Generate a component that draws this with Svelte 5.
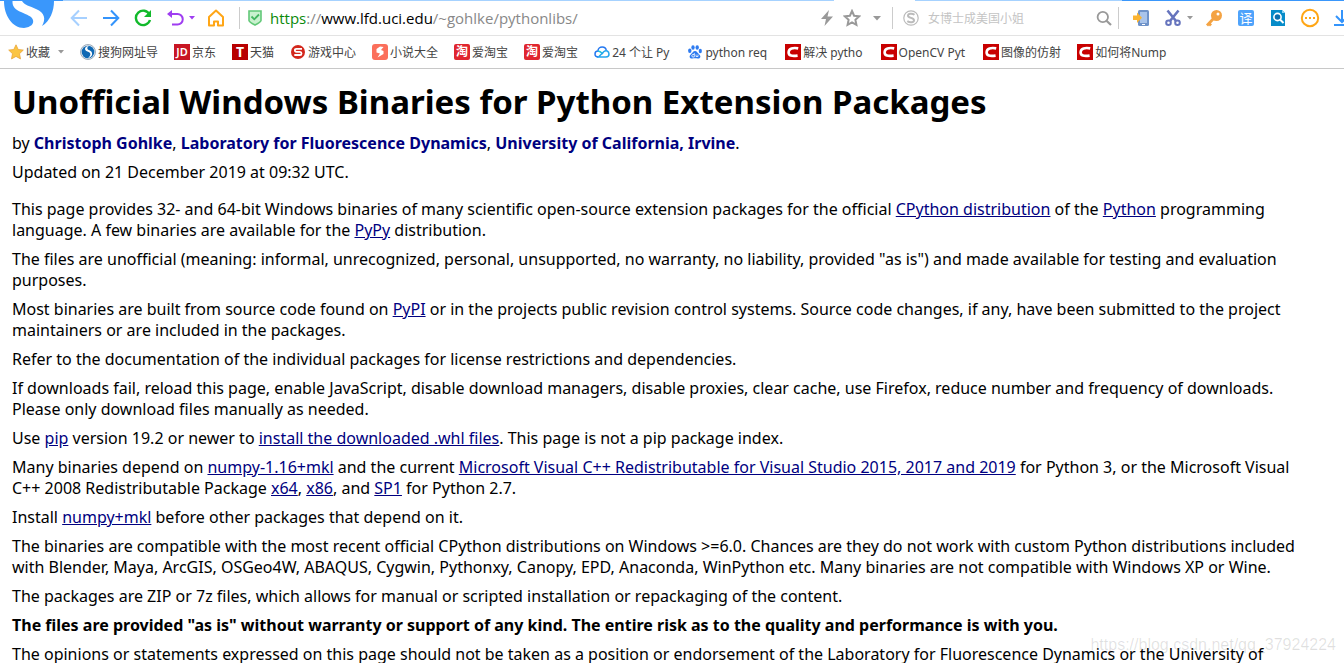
<script>
  const bookmarks = [
    { icon: 'sogou', text: '搜狗网址导' },
    { icon: 'jd', text: '京东' },
    { icon: 'tmall', text: '天猫' },
    { icon: 'game', text: '游戏中心' },
    { icon: 'novel', text: '小说大全' },
    { icon: 'tao', text: '爱淘宝' },
    { icon: 'tao', text: '爱淘宝' },
    { icon: 'cloud', text: '24 个让 Py' },
    { icon: 'baidu', text: 'python req' },
    { icon: 'csdn', text: '解决 pytho' },
    { icon: 'csdn', text: 'OpenCV Pyt' },
    { icon: 'csdn', text: '图像的仿射' },
    { icon: 'csdn', text: '如何将Nump' },
  ];

  const hasLatin = (text) => /[a-z]/i.test(text);
</script>

<svelte:head><title>Python Extension Packages for Windows</title></svelte:head>

{#snippet caret(color)}
  <svg width="6" height="4" viewBox="0 0 6 4"><path d="M0 0h6L3 3.5z" fill={color} /></svg>
{/snippet}

<header>
  <div class="strip"></div>
  <div class="toolbar">
    <svg class="logo" width="56" height="28" viewBox="0 0 56 28">
      <path d="M4 0C4 14 12 27 24 27C31 26 34 23 33 19C32 15 27 14 21 11C16 9 12 6 12.500 0z" fill="#3a97fb" />
      <path d="M22 0C24 4 30 5 36 8C45 12 46 18 42 25C50 20 54 10 54 0z" fill="#3a97fb" />
    </svg>
    <nav aria-label="Navigation">
      <button aria-label="Back"><svg width="18" height="18" viewBox="0 0 18 18" fill="none" stroke="#a6d0ff" stroke-width="2"><path d="M17 9H2M9 1.5L1.7 9L9 16.5" /></svg></button>
      <button aria-label="Forward"><svg width="18" height="18" viewBox="0 0 18 18" fill="none" stroke="#3494fb" stroke-width="2"><path d="M1 9h15M9 1.5L16.300 9L9 16.500" /></svg></button>
      <button aria-label="Reload"><svg width="18" height="18" viewBox="0 0 18 18" fill="none" stroke="#11b92b" stroke-width="2.400"><path d="M15.500 5.500A7.200 7.200 0 1 0 16 11" /><path d="M17 1v7h-7z" fill="#11b92b" stroke="none" /></svg></button>
      <button class="wide" aria-label="Undo close"><svg width="18" height="18" viewBox="0 0 18 18" fill="none" stroke="#9f3df1" stroke-width="2"><path d="M4 5h7.500a5 5 0 0 1 0 10.500H6" /><path d="M1 5L6 1v8z" fill="#9f3df1" stroke="none" /></svg>{@render caret('#9f3df1')}</button>
      <button aria-label="Home"><svg width="18" height="18" viewBox="0 0 18 18" fill="none" stroke="#ffa616" stroke-width="2"><path d="M2 16.500V8L9 1.500L16 8V16.500h-5v-4h-4v4z" stroke-linejoin="round" /></svg></button>
    </nav>
    <i class="sep"></i>
    <svg class="shield" width="14" height="16" viewBox="0 0 14 16"><path d="M1 1h12v9.500c0 1.500-3 3-6 4.500c-3-1.500-6-3-6-4.500z" fill="#c9f1ce" stroke="#62c878" stroke-width="1.600" /><path d="M3.500 6.500L6.300 9.300L11 4.500" fill="none" stroke="#43b65f" stroke-width="1.800" /></svg>
    <div class="url"><span class="scheme">https</span>://<span class="host">www.lfd.uci.edu</span>/~gohlke/pythonlibs/</div>
    <div class="page-actions">
      <button aria-label="Fast mode"><svg width="14" height="18" viewBox="0 0 14 18"><path d="M9 1L1 10h5L4.500 17L13 7.500H7.500z" fill="#999" /></svg></button>
      <button aria-label="Add bookmark"><svg width="18" height="18" viewBox="0 0 18 18"><path d="M9 2l2.100 4.700l5 .6l-3.700 3.500l1 5L9 13.300l-4.400 2.500l1-5L1.900 7.300l5-.6z" fill="none" stroke="#999" stroke-width="2" /></svg></button>
      <button aria-label="More page actions"><svg width="8" height="5" viewBox="0 0 8 5"><path d="M0 0h8L4 4.500z" fill="#999" /></svg></button>
    </div>
    <i class="sep"></i>
    <div class="search">
      <svg width="16" height="16" viewBox="0 0 16 16" fill="none" stroke="#bbb"><circle cx="8" cy="8" r="7.200" stroke-width="1.200" /><path d="M11.500 4.800C9 3 5 3.500 5 5.700C5 8.400 11 7.300 11 10.200C11 12.600 7 13 4.300 11.200" stroke-width="2" /></svg>
      <input aria-label="Search" placeholder="女博士成美国小姐" />
      <button aria-label="Run search"><svg width="16" height="16" viewBox="0 0 16 16" fill="none" stroke="#999" stroke-width="1.800"><circle cx="6.800" cy="7" r="5.200" /><path d="M10.500 10.700L15 15" stroke-width="2.200" /></svg></button>
    </div>
    <i class="sep"></i>
    <div class="tools">
      <button aria-label="Send to phone"><svg width="18" height="18" viewBox="0 0 18 18"><rect x="6" y="1" width="11" height="16" rx="1.500" fill="#6f93c9" /><rect x="8" y="3" width="7" height="11" fill="#a9c4ea" /><rect x="10" y="15" width="3" height="1" fill="#fff" /><path d="M1 6.500h4V3.500L10 8.800L5 14v-3H1z" fill="#fbb431" /></svg></button>
      <button class="wide" aria-label="Screenshot"><svg width="18" height="18" viewBox="0 0 18 18" fill="none" stroke="#6674bd"><path d="M3.500 1.500L12 12M14.500 1.500L6 12" stroke-width="2.600" /><circle cx="4.500" cy="13.800" r="2.300" stroke-width="2" /><circle cx="13.500" cy="13.800" r="2.300" stroke-width="2" /></svg>{@render caret('#999')}</button>
      <button aria-label="Passwords"><svg width="18" height="18" viewBox="0 0 18 18"><circle cx="11.500" cy="6.500" r="5.500" fill="#f4a343" /><path d="M9 9L2 16.500M3.500 14l2.500 2.500" stroke="#f4a343" stroke-width="2.800" /><circle cx="13" cy="5" r="1.500" fill="#fff" /></svg></button>
      <button aria-label="Translate"><span class="translate">译</span></button>
      <button aria-label="Find in page"><svg width="16" height="18" viewBox="0 0 16 18"><path d="M1 1h11l3 3v13H1z" fill="#078cc9" /><path d="M12 1v3h3z" fill="#8fd6f5" /><circle cx="7.500" cy="8" r="3.600" fill="#0d6fae" stroke="#fff" stroke-width="1.600" /><path d="M10 10.500l3.500 3.500" stroke="#fff" stroke-width="2" /></svg></button>
      <button aria-label="More tools"><svg width="20" height="20" viewBox="0 0 20 20"><circle cx="10" cy="10" r="8.200" fill="none" stroke="#ffa616" stroke-width="2" /><g fill="#ffa616"><rect x="5" y="9" width="2" height="2" /><rect x="9" y="9" width="2" height="2" /><rect x="13" y="9" width="2" height="2" /></g></svg></button>
      <button aria-label="Downloads"><svg width="18" height="18" viewBox="0 0 18 18" fill="none" stroke="#3494fb" stroke-width="2"><path d="M9 1v12M3 7l6 6l6-6M1 16h16" /></svg></button>
    </div>
  </div>

  <nav class="bookmarks" aria-label="Bookmarks">
    <button class="fav"><svg width="16" height="16" viewBox="0 0 16 16"><path d="M8 .8l2.200 4.700l5.100.6l-3.800 3.600l1 5.200L8 12.400l-4.500 2.500l1-5.200L.7 6.100l5.100-.6z" fill="#fbc543" stroke="#e9a43a" stroke-width=".8" /></svg><span>收藏</span>{@render caret('#999')}</button>
    {#each bookmarks as b}
      <a href="#top">
        {#if b.icon === 'jd'}<span class="tile jd">JD</span>
        {:else if b.icon === 'tmall'}<span class="tile tmall">T</span>
        {:else if b.icon === 'tao'}<span class="tile tao">淘</span>
        {:else}
          <svg width="16" height="16" viewBox="0 0 16 16">
            {#if b.icon === 'sogou'}
              <circle cx="8" cy="8" r="7.500" fill="#dfe7ee" stroke="#8a9bab" stroke-width=".8" />
              <circle cx="8" cy="8" r="6.300" fill="#0e68b4" />
              <path d="M9 1.700C4 2.500 4 6.500 7.500 7.500C11 8.500 11.500 11 8 14.300C13.500 13 13 7.500 9.500 6.300C7 5.500 6.500 3.500 9 1.700z" fill="#fff" />
            {:else if b.icon === 'game'}
              <circle cx="8" cy="8" r="7" fill="#d3271c" />
              <path d="M12 4.800H6.500C4.300 4.800 4.300 7.800 6.500 7.800H10C12 7.800 12 11 10 11H4.300" fill="none" stroke="#fff" stroke-width="1.800" />
            {:else if b.icon === 'novel'}
              <rect width="16" height="16" rx="3" fill="#fb6f5b" />
              <path d="M8 2.500L4.500 5V8.500L8 9.500L5.500 13.500L11.500 10V7L9 6L11.500 3z" fill="#fff" />
            {:else if b.icon === 'cloud'}
              <path d="M4.500 13C1.800 13 1 11.500 1 10C1 8.200 2.500 7 4 7C4 4.500 6 3 8.200 3C10.500 3 12 4.500 12.300 6.500" fill="none" stroke="#2478f0" stroke-width="1.500" />
              <path d="M4 7C6 7 7.500 8.500 9 10" fill="none" stroke="#20c3d8" stroke-width="1.500" />
              <path d="M4.500 13L10 7.500C12 5.800 15 7 15 10C15 12 13.500 13 12 13z" fill="none" stroke="#23a5ee" stroke-width="1.500" />
            {:else if b.icon === 'baidu'}
              <g fill="#2e7bf0"><ellipse cx="2.800" cy="6.800" rx="1.700" ry="2.200" /><ellipse cx="6" cy="3.500" rx="1.700" ry="2.300" /><ellipse cx="10.200" cy="3.500" rx="1.700" ry="2.300" /><ellipse cx="13.300" cy="7" rx="1.600" ry="2.200" /><path d="M8 7C10 7 10.500 9 12.300 10.500C14.500 12.500 13 15 10.500 14.500C9 14.200 7 14.200 5.500 14.500C3 15 1.500 12.500 3.700 10.500C5.500 9 6 7 8 7z" /></g>
              <path d="M7.300 9v4H6a1 1 0 0 1 0-2.500h1.300M9 10.500V12.500h2v-2" fill="none" stroke="#fff" stroke-width=".8" />
            {:else}
              <path d="M0 0h16v16H0z" fill="#c80000" />
              <path d="M13.200 4.400C8 3.400 3.800 4.500 3.600 8.200C3.500 11.800 7 12.400 12.600 11.600" fill="none" stroke="#fff" stroke-width="2.600" />
            {/if}
          </svg>
        {/if}
        <span class="label" class:latin={hasLatin(b.text)}>{b.text}</span>
      </a>
    {/each}
  </nav>
</header>

<main id="top">
  <h1>Unofficial Windows Binaries for Python Extension Packages</h1>
  <p>by <a class="author" href="#top">Christoph Gohlke</a>, <a class="author" href="#top">Laboratory for Fluorescence Dynamics</a>, <a class="author" href="#top">University of California, Irvine</a>.</p>
  <p class="updated">Updated on 21 December 2019 at 09:32 UTC.</p>
  <p>This page provides 32- and 64-bit Windows binaries of many scientific open-source extension packages for the official <a href="#top">CPython distribution</a> of the <a href="#top">Python</a> programming<br />language. A few binaries are available for the <a href="#top">PyPy</a> distribution.</p>
  <p>The files are unofficial (meaning: informal, unrecognized, personal, unsupported, no warranty, no liability, provided "as is") and made available for testing and evaluation<br />purposes.</p>
  <p>Most binaries are built from source code found on <a href="#top">PyPI</a> or in the projects public revision control systems. Source code changes, if any, have been submitted to the project<br />maintainers or are included in the packages.</p>
  <p>Refer to the documentation of the individual packages for license restrictions and dependencies.</p>
  <p>If downloads fail, reload this page, enable JavaScript, disable download managers, disable proxies, clear cache, use Firefox, reduce number and frequency of downloads.<br />Please only download files manually as needed.</p>
  <p>Use <a href="#top">pip</a> version 19.2 or newer to <a href="#top">install the downloaded .whl files</a>. This page is not a pip package index.</p>
  <p>Many binaries depend on <a href="#top">numpy-1.16+mkl</a> and the current <a href="#top">Microsoft Visual C++ Redistributable for Visual Studio 2015, 2017 and 2019</a> for Python 3, or the Microsoft Visual<br />C++ 2008 Redistributable Package <a href="#top">x64</a>, <a href="#top">x86</a>, and <a href="#top">SP1</a> for Python 2.7.</p>
  <p>Install <a href="#top">numpy+mkl</a> before other packages that depend on it.</p>
  <p>The binaries are compatible with the most recent official CPython distributions on Windows &gt;=6.0. Chances are they do not work with custom Python distributions included<br />with Blender, Maya, ArcGIS, OSGeo4W, ABAQUS, Cygwin, Pythonxy, Canopy, EPD, Anaconda, WinPython etc. Many binaries are not compatible with Windows XP or Wine.</p>
  <p>The packages are ZIP or 7z files, which allows for manual or scripted installation or repackaging of the content.</p>
  <p><strong>The files are provided "as is" without warranty or support of any kind. The entire risk as to the quality and performance is with you.</strong></p>
  <p>The opinions or statements expressed on this page should not be taken as a position or endorsement of the Laboratory for Fluorescence Dynamics or the University of</p>
</main>
<div class="watermark">https://blog.csdn.net/qq_37924224</div>

<style>
  :global(html), :global(body) { height: 100%; overflow: hidden; background: #fff; }
  header, main { font-family: "Noto Sans", "Noto Sans CJK SC", sans-serif; }
  header { overflow: hidden; }
  svg { display: block; flex: none; }
  button { display: flex; align-items: center; justify-content: center; width: 32px; height: 32px; flex: none; padding: 0; border: 0; background: none; font: inherit; color: inherit; }
  button.wide { width: 41px; gap: 5px; padding-left: 1px; box-sizing: border-box; }
  .strip { height: 1px; background: linear-gradient(90deg, #3a97fb 63px, #a6d2ff 63px 834px, #fff 834px 915px, #a6d2ff 915px 1122px, #3a97fb 1122px); }
  .toolbar { display: flex; align-items: center; height: 34px; border-bottom: 1px solid #e3e3e3; }
  .logo { align-self: flex-start; margin-right: 7px; }
  nav, .page-actions, .tools { display: flex; align-items: center; }
  .sep { flex: none; width: 1px; height: 22px; background: #ccc; margin: 0 6px 0 7px; }
  .shield { margin: 0 8px 0 2px; }
  .url { flex: 1; min-width: 0; overflow: hidden; white-space: nowrap; font-family: "Open Sans", sans-serif; font-size: 15px; line-height: 22px; color: #888; }
  .scheme { color: #0a8a0a; }
  .host { color: #000; }
  .page-actions { margin-right: -4px; }
  .page-actions button { width: 25px; }
  .search { display: flex; align-items: center; width: 219px; flex: none; box-sizing: border-box; padding-left: 4px; margin-right: -7px; }
  .search input { flex: 1; min-width: 0; margin-left: 9px; padding: 0; border: 0; outline: 0; background: none; font: 12px/20px "Noto Sans CJK SC", sans-serif; }
  .search input::placeholder { color: #c4c4c4; opacity: 1; }
  .search button { width: 28px; }
  .tools { margin-right: -14px; }
  .translate { width: 16px; height: 16px; border-radius: 2px; background: #4fa3fb; color: #fff; font-size: 13px; line-height: 16px; text-align: center; }
  .bookmarks { gap: 16px; height: 32px; padding-left: 8px; border-bottom: 1px solid #c8c8c8; font-size: 12px; line-height: 18px; color: #444; white-space: nowrap; }
  .bookmarks a { display: flex; align-items: center; gap: 2px; color: #444; text-decoration: none; }
  .bookmarks .fav { width: auto; gap: 2px; }
  .label, .fav span { padding-top: 2px; }
  .fav span { margin-right: 6px; }
  .latin { padding-right: 2px; }
  .tile { width: 16px; height: 16px; color: #fff; text-align: center; font-weight: 700; line-height: 16px; }
  .jd { background: #c81623; font-size: 11px; font-weight: 600; }
  .tmall { background: #b80000; font-size: 14px; }
  .tao { background: #e0262e; border-radius: 2px; font-size: 12px; }
  main { padding: 12px 12px 0; font-size: 16px; line-height: 21px; color: #000; white-space: nowrap; }
  h1 { margin: 0 0 10px; font-size: 33px; line-height: 42px; }
  p { margin: 0 0 8px; }
  .updated { margin-bottom: 16px; }
  main a { color: #000080; }
  main a.author { font-weight: 700; text-decoration: none; }
  .watermark { position: absolute; right: 8px; bottom: 8px; font: 16px/20px "Liberation Sans", sans-serif; color: rgba(0, 0, 0, .12); }
</style>
